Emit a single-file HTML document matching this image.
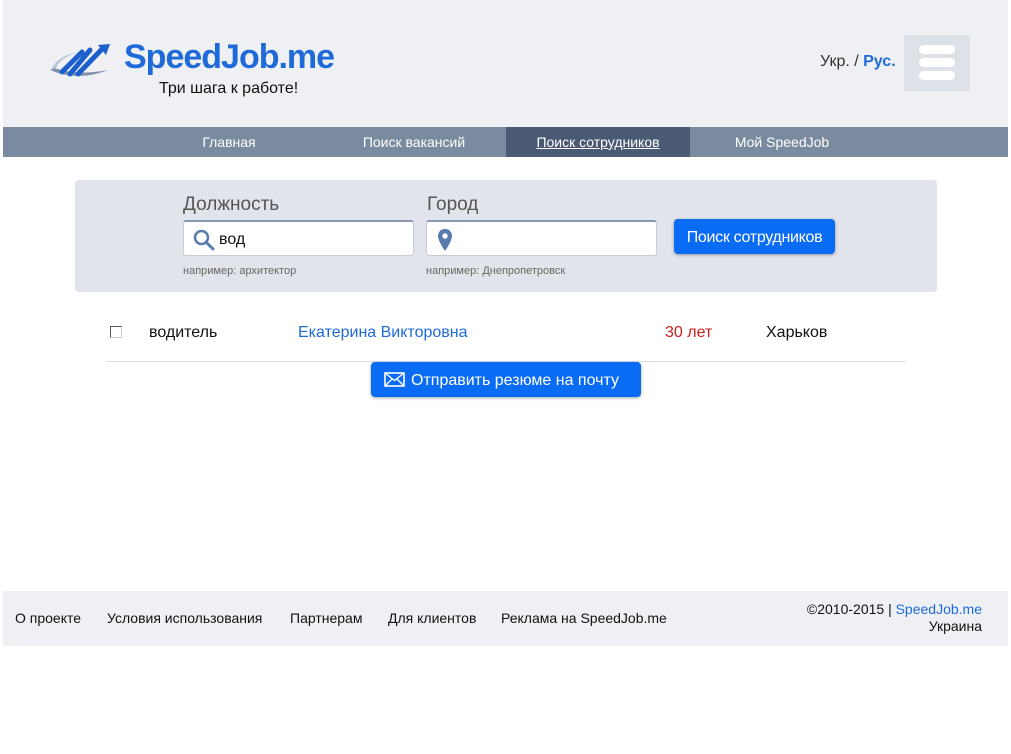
<!DOCTYPE html>
<html><head><meta charset="utf-8"><style>
body{margin:0;width:1011px;height:754px;background:#fff;font-family:"Liberation Sans","DejaVu Sans",sans-serif;position:relative;overflow:hidden}
.a{position:absolute}
#hdr{left:3px;top:0;width:1005px;height:127px;background:#eef0f4}
#nav{left:3px;top:127px;width:1005px;height:30px;background:#7a8a9f}
#nav span{position:absolute;top:0;height:30px;line-height:30px;color:#fff;font-size:14px;text-align:center}
#sb{left:75px;top:180px;width:862px;height:112px;background:#e1e4ea;border-radius:4px}
.lbl{font-size:19px;color:#555}
.inp{background:#fff;border:1px solid #c8ccd6;border-top:2px solid #8797b3;border-radius:3px;height:33px;width:229px}
.hint{font-size:11px;color:#666}
.btn{background:#0a6cf5;color:#fff;border-radius:4px;box-shadow:0 1px 3px rgba(0,0,0,.35)}
#ft{left:3px;top:591px;width:1005px;height:55px;background:#eef0f4}
#ft span{position:absolute;top:19px;font-size:14px;color:#111}
</style></head><body>
<div id="hdr" class="a"></div>
<svg class="a" style="left:48px;top:42px" width="72" height="38" viewBox="0 0 72 38">
<path d="M4 26 Q10 14 30 10 Q12 16 8 26Z" fill="#b8c4d8"/>
<path d="M2 28 Q30 40 60 28 Q30 34 6 26Z" fill="#7e8ea8"/>
<path d="M14 30 L34 10 M22 32 L42 8 M30 32 L56 5" stroke="#1a5fcc" stroke-width="5" stroke-linecap="round"/>
<path d="M50 3 L62 2 L58 13Z" fill="#1a5fcc"/>
</svg>
<div class="a" style="left:124px;top:38px;font-size:34px;font-weight:bold;color:#1e6ad8;letter-spacing:-1px">SpeedJob.me</div>
<div class="a" style="left:159px;top:80px;font-size:16px;color:#111">Три шага к работе!</div>
<div class="a" style="left:820px;top:53px;font-size:16px;color:#333">Укр. / <b style="color:#1e6ad8">Рус.</b></div>
<div class="a" style="left:904px;top:35px;width:66px;height:56px;background:#dde1e8"></div>
<div class="a" style="left:919px;top:45px;width:36px;height:9px;background:#fff;border-radius:5px"></div>
<div class="a" style="left:919px;top:58px;width:36px;height:9px;background:#fff;border-radius:5px"></div>
<div class="a" style="left:919px;top:71px;width:36px;height:9px;background:#fff;border-radius:5px"></div>
<div id="nav" class="a">
<span style="left:176px;width:100px">Главная</span>
<span style="left:345px;width:132px">Поиск вакансий</span>
<span style="left:503px;width:184px;background:#4b5a74;text-decoration:underline">Поиск сотрудников</span>
<span style="left:712px;width:134px">Мой SpeedJob</span>
</div>
<div id="sb" class="a"></div>
<div class="a lbl" style="left:183px;top:194px">Должность</div>
<div class="a lbl" style="left:427px;top:194px">Город</div>
<div class="a inp" style="left:183px;top:220px"></div>
<div class="a inp" style="left:426px;top:220px"></div>
<svg class="a" style="left:193px;top:229px" width="22" height="22" viewBox="0 0 22 22"><circle cx="8.5" cy="8.5" r="6.5" fill="none" stroke="#5a7bb0" stroke-width="2.5"/><path d="M13 13 L20 20" stroke="#5a7bb0" stroke-width="3" stroke-linecap="round"/></svg>
<div class="a" style="left:219px;top:231px;font-size:16px;color:#111">вод</div>
<svg class="a" style="left:437px;top:228px" width="16" height="24" viewBox="0 0 16 24"><path d="M8 1 C3 1 1 5 1 8 C1 13 8 23 8 23 C8 23 15 13 15 8 C15 5 13 1 8 1Z" fill="#5a7bb0"/><circle cx="8" cy="8" r="2.7" fill="#fff"/></svg>
<div class="a hint" style="left:183px;top:265px">например: архитектор</div>
<div class="a hint" style="left:426px;top:265px">например: Днепропетровск</div>
<div class="a btn" style="left:674px;top:219px;width:161px;height:35px;line-height:37px;text-align:center;font-size:16px;letter-spacing:-0.3px">Поиск сотрудников</div>
<div class="a" style="left:110px;top:326px;width:10px;height:10px;border:1px solid #555;border-right-color:#ccc;border-bottom-color:#ccc;background:#fff"></div>
<div class="a" style="left:149px;top:324px;font-size:16px;color:#111">водитель</div>
<div class="a" style="left:298px;top:324px;font-size:16px;color:#1e6ad8">Екатерина Викторовна</div>
<div class="a" style="left:665px;top:324px;font-size:16px;color:#cc1f1f">30 лет</div>
<div class="a" style="left:766px;top:324px;font-size:16px;color:#111">Харьков</div>
<div class="a" style="left:106px;top:361px;width:800px;height:1px;background:#ddd"></div>
<div class="a btn" style="left:371px;top:362px;width:270px;height:35px"></div>
<svg class="a" style="left:384px;top:372px" width="21" height="15" viewBox="0 0 21 15"><rect x="1" y="1" width="19" height="13" fill="none" stroke="#fff" stroke-width="1.6"/><path d="M1 1 L10.5 8.5 L20 1 M1 14 L8 7 M20 14 L13 7" fill="none" stroke="#fff" stroke-width="1.4"/></svg>
<div class="a" style="left:411px;top:372px;font-size:16px;color:#fff">Отправить резюме на почту</div>
<div id="ft" class="a">
<span style="left:12px">О проекте</span>
<span style="left:104px">Условия использования</span>
<span style="left:287px">Партнерам</span>
<span style="left:385px">Для клиентов</span>
<span style="left:498px">Реклама на SpeedJob.me</span>
</div>
<div class="a" style="left:700px;top:601px;width:282px;text-align:right;font-size:14px;color:#111;line-height:17px">©2010-2015 | <span style="color:#1e6ad8">SpeedJob.me</span><br>Украина</div>
</body></html>
